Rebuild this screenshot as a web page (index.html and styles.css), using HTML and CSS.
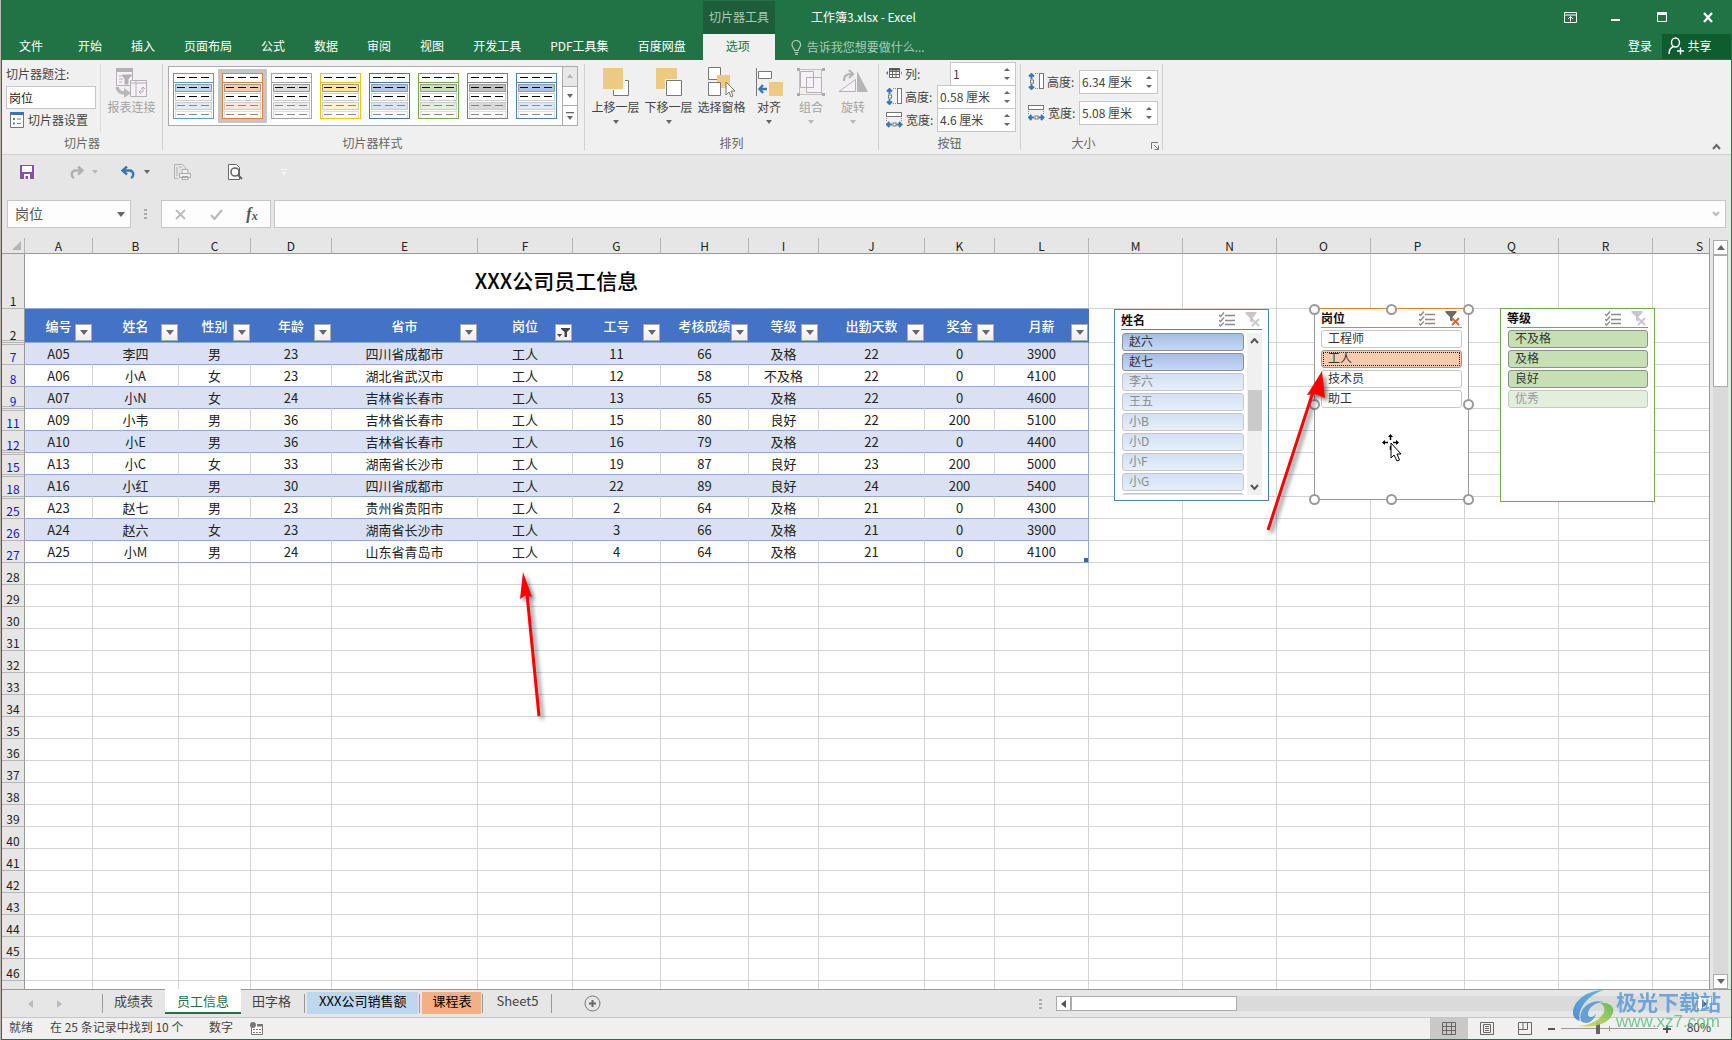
FILE: index.html
```html
<!DOCTYPE html>
<html lang="zh-CN">
<head>
<meta charset="utf-8">
<title>工作簿3.xlsx - Excel</title>
<link rel="stylesheet" href="styles.css">
</head>
<body>
<svg class="defs" aria-hidden="true">
  <symbol id="style-thumb" viewBox="0 0 41 46">
    <rect x="0" y="0" width="41" height="46" fill="#fff"/>
    <rect x="2.5" y="11.5" width="36" height="7" fill="var(--mid)" stroke="#999"/>
    <rect x="2.5" y="20.5" width="36" height="7" fill="#fff" stroke="#ccc"/>
    <rect x="2.5" y="29.5" width="36" height="7" fill="var(--light)" stroke="#ccc"/>
    <rect x="2.5" y="38.5" width="36" height="7" fill="#fff" stroke="#ddd"/>
    <rect x="0.5" y="0.5" width="40" height="45" fill="none" stroke="var(--line)"/>
    <path d="M0 9.5H41" stroke="var(--line)"/>
    <path d="M4 4.500h8m4 0h8m4 0h8M4 14.500h8m4 0h8m4 0h8M4 23.500h8m4 0h8m4 0h8" stroke="#000"/>
    <path d="M4 32.500h8m4 0h8m4 0h8M4 41.500h8m4 0h8m4 0h8" stroke="#888"/>
  </symbol>
  <symbol id="multi" viewBox="0 0 16 15">
    <path d="M6 3.500h10M6 8.500h10M6 12.500h10" stroke="#8a8a8a" stroke-width="1.500"/>
    <path d="M0 3l1.500 1.500L5 0.500M0 8l1.500 1.500L5 5.500M0 12.500L1.500 14L5 10.500" fill="none" stroke="#8a8a8a" stroke-width="1.300"/>
  </symbol>
  <symbol id="clear" viewBox="0 0 15 15">
    <path d="M0.500 0h11v1.500L7.500 6v5L5 9V6L0.500 1.500z" fill="var(--funnel)"/>
    <path d="M6 6h9v9H6z" fill="#fff"/>
    <path d="M5 5h2.500v6L5 9z" fill="var(--funnel)"/>
    <path d="M7 7l7 7M14 7l-7 7" stroke="var(--cross)" stroke-width="1.800"/>
  </symbol>
  <symbol id="hsize" viewBox="0 0 16 17">
    <path d="M3.500 1v5M1 3.500l2.500-2.500L6 3.500M3.500 16v-5M1 13.500L3.500 16 6 13.500" fill="none" stroke="#3a76b5" stroke-width="2"/>
    <rect x="2.500" y="7" width="3" height="3" fill="#fff" stroke="#777"/>
    <path d="M7 .5h4M7 15.500h4" stroke="#888" stroke-dasharray="1 1"/>
    <rect x="11.500" y=".5" width="4" height="15" fill="#fff" stroke="#777"/>
  </symbol>
  <symbol id="wsize" viewBox="0 0 17 16">
    <rect x=".5" y=".5" width="15" height="4" fill="#fff" stroke="#777"/>
    <path d="M.5 6v4M15.500 6v4" stroke="#888" stroke-dasharray="1 1"/>
    <path d="M1 12.500h5M3.500 10L1 12.500 3.500 15M15.500 12.500h-5M13 10L15.500 12.500 13 15" fill="none" stroke="#3a76b5" stroke-width="2"/>
    <rect x="7" y="11" width="3" height="3" fill="#fff" stroke="#777"/>
  </symbol>
  <symbol id="funnel-on" viewBox="0 0 15 15">
    <path d="M5 3h9v1L11 7v5H8.500V7L5 4z" fill="#444"/><path d="M1 9h5l-2.500 3z" fill="#444"/>
  </symbol>
</svg>

<div class="window">
  <header class="top">
    <div class="titlebar">
      <div class="context">切片器工具</div>
      <h1 class="doc">工作簿3.xlsx - Excel</h1>
      <div class="winbtns">
        <button aria-label="功能区显示选项"><svg width="13" height="11"><path d="M.5.500h12v10H.5zM.5 3h12M6.500 9.500v-5M4 7l2.500-2.500L9 7" fill="none" stroke="#fff"/></svg></button>
        <button aria-label="最小化"><svg width="10" height="11"><path d="M0 8h9" stroke="#fff" stroke-width="2"/></svg></button>
        <button aria-label="最大化"><svg width="11" height="11"><path d="M.5.500h9v9h-9z" fill="none" stroke="#fff"/><path d="M0 1.500h10" stroke="#fff" stroke-width="3"/></svg></button>
        <button aria-label="关闭"><svg width="11" height="11"><path d="M1 1l8 9M9 1L1 10" stroke="#fff" stroke-width="2.200"/></svg></button>
      </div>
    </div>
    <nav class="tabs">
      <button class="file">文件</button><button>开始</button><button>插入</button><button>页面布局</button><button>公式</button><button>数据</button><button>审阅</button><button>视图</button><button>开发工具</button><button>PDF工具集</button><button>百度网盘</button><button class="on">选项</button>
      <button class="tell"><svg width="11" height="15"><path d="M3.500 10.500C3.500 8 1 7.500 1 4.800a4.300 4.300 0 0 1 8.600 0c0 2.700-2.400 3.200-2.400 5.700zM3.500 12.500h4M4 14.300h3" fill="none" stroke="#a6cdb7" stroke-width="1.200"/></svg>告诉我您想要做什么...</button>
      <button class="login">登录</button>
      <button class="share"><svg width="16" height="18"><path d="M11.500 5.500a4 4.500 0 1 1-8 0a4 4.500 0 1 1 8 0M5.500 9.500C2 11 1 13 1 17M9 14h7M12.500 10.500v7" fill="none" stroke="#fff" stroke-width="1.400"/></svg>共享</button>
    </nav>
  </header>

  <section class="ribbon">
    <div class="group g-slicer">
      <div class="body">
        <div class="caption">
          <label for="cap">切片器题注:</label>
          <input id="cap" type="text" value="岗位">
          <button class="set"><svg width="14" height="16"><path d="M.5.500h13v15H.5z" fill="#fff" stroke="#777"/><path d="M0 1.500h14" stroke="#3a76b5" stroke-width="3"/><path d="M7 7h4M7 11.500h4" stroke="#777"/><path d="M3 6h2v2H3zM3 10.500h2v2H3z" fill="#777"/></svg>切片器设置</button>
        </div>
        <button class="big off report"><svg width="31" height="30"><path d="M.5.500h16v17H.500z" fill="#f6f1f6" stroke="#b3b0b3"/><path d="M0 2h17" stroke="#b3b0b3" stroke-width="4"/><path d="M6 7h10l-4 4v5h-3v-5zM3 8h3M3 11h4M3 14h3" fill="#b3b0b3" stroke="#b3b0b3"/><path d="M14.500 12.500h16v16h-16z" fill="#f6f1f6" stroke="#b3b0b3"/><path d="M15 15h15M20 13v15" stroke="#b3b0b3"/><path d="M27 19v5h-4m2-2l-2 2 2 2m0-5l2-2 2 2" fill="none" stroke="#b3b0b3"/><path d="M1 19c1 5 4 6 8 6" fill="none" stroke="#b8b8b8" stroke-width="3.500"/><path d="M8 20l7 5-7 5z" fill="#b8b8b8"/></svg>报表连接</button>
      </div>
      <div class="name">切片器</div>
    </div>
    <div class="group g-styles">
      <div class="gallery">
        <button class="s1" aria-label="样式1"><svg><use href="#style-thumb"/></svg></button>
        <button class="s2 sel" aria-label="样式2"><svg><use href="#style-thumb"/></svg></button>
        <button class="s3" aria-label="样式3"><svg><use href="#style-thumb"/></svg></button>
        <button class="s4" aria-label="样式4"><svg><use href="#style-thumb"/></svg></button>
        <button class="s5" aria-label="样式5"><svg><use href="#style-thumb"/></svg></button>
        <button class="s6" aria-label="样式6"><svg><use href="#style-thumb"/></svg></button>
        <button class="s7" aria-label="样式7"><svg><use href="#style-thumb"/></svg></button>
        <button class="s8" aria-label="样式8"><svg><use href="#style-thumb"/></svg></button>
        <div class="gscroll">
          <button class="dis" aria-label="上一行"><svg width="6" height="4"><path d="M0 4l3-4 3 4z" fill="#b5b5b5"/></svg></button>
          <button aria-label="下一行"><svg width="6" height="4"><path d="M0 0l3 4 3-4z" fill="#666"/></svg></button>
          <button aria-label="其他"><svg width="8" height="8"><path d="M0 0h8v1.200H0zM1 4l3 4 3-4z" fill="#666"/></svg></button>
        </div>
      </div>
      <div class="name">切片器样式</div>
    </div>
    <div class="group g-arrange">
      <div class="body">
        <button class="big"><svg width="26" height="30"><path d="M10.500 12.500h15v15h-15z" fill="#fff" stroke="#777"/><path d="M0 0h22v22H0z" fill="#f0f0f0"/><path d="M0 0h20v21H0z" fill="#eec980"/></svg>上移一层<i class="caret"></i></button>
        <button class="big"><svg width="26" height="30"><path d="M0 0h21v21H0z" fill="#eec980"/><path d="M9 11h17v17H9z" fill="#f0f0f0"/><path d="M10.500 12.500h15v15h-15z" fill="#fff" stroke="#777"/></svg>下移一层<i class="caret"></i></button>
        <button class="big"><svg width="27" height="30"><path d="M.5-.500h12v12H.500zM.5 14.500h12v13H.500z" fill="#fff" stroke="#777"/><path d="M9 7h13v13H13v-6H9z" fill="#eec980"/><path d="M18 14v13l3-3 2 5 2-1-2-5h4z" fill="#fff" stroke="#777"/></svg>选择窗格</button>
        <button class="big narrow"><svg width="27" height="30"><path d="M.500 0v28" stroke="#777"/><path d="M2.500 3.500h13v7h-13z" fill="#fff" stroke="#777"/><path d="M13 14h14v14H13z" fill="#eec980"/><path d="M11 21H4M7 17l-3.500 4L7 25" fill="none" stroke="#3a76b5" stroke-width="2.400"/></svg>对齐<i class="caret"></i></button>
        <button class="big narrow off"><svg width="28" height="30"><path d="M2.500 1.500h22v25h-22z" fill="none" stroke="#c5bfc5"/><path d="M3.500 3.500h13v16h-13zM9.500 9.500h15v15h-15z" fill="#f6f1f6" stroke="#b3b0b3"/><path d="M16.500 9v10.500H9" fill="none" stroke="#b3b0b3"/><path d="M0 0h3v3H0zM25 0h3v3h-3zM0 25h3v3H0zM25 25h3v3h-3z" fill="#aaa"/></svg>组合<i class="caret"></i></button>
        <button class="big narrow off"><svg width="30" height="30"><path d="M1 23.500h16.500v-12z" fill="#f6f1f6" stroke="#b3b0b3"/><path d="M19 3v21h11z" fill="#b5b5b5"/><path d="M6 13c0-6 3-7 8-7M11 2l4 4-4 4" fill="none" stroke="#b5b5b5" stroke-width="2.200"/></svg>旋转<i class="caret"></i></button>
      </div>
      <div class="name">排列</div>
    </div>
    <div class="group g-button">
      <div class="rows">
        <div class="row"><svg width="16" height="17"><path d="M3.500 3.500h10v9h-10zM3 6.500h10M6.500 4v8M10 4v8M3 9.500h10" fill="#fff" stroke="#666"/><path d="M3 4.500h11" stroke="#555" stroke-width="2"/><path d="M2 6v4L0 8zM15 6v4l1-2z" fill="#3a76b5"/></svg><label for="cols">列:</label><span class="spin cols"><input id="cols" value="1"><span><button aria-label="增加"></button><button aria-label="减少"></button></span></span></div>
        <div class="row"><svg width="16" height="17"><use href="#hsize"/></svg><label for="bh">高度:</label><span class="spin"><input id="bh" value="0.58 厘米"><span><button aria-label="增加"></button><button aria-label="减少"></button></span></span></div>
        <div class="row"><svg width="17" height="16"><use href="#wsize"/></svg><label for="bw">宽度:</label><span class="spin"><input id="bw" value="4.6 厘米"><span><button aria-label="增加"></button><button aria-label="减少"></button></span></span></div>
      </div>
      <div class="name">按钮</div>
    </div>
    <div class="group g-size">
      <div class="rows">
        <div class="row"><svg width="16" height="17"><use href="#hsize"/></svg><label for="sh">高度:</label><span class="spin"><input id="sh" value="6.34 厘米"><span><button aria-label="增加"></button><button aria-label="减少"></button></span></span></div>
        <div class="row"><svg width="17" height="16"><use href="#wsize"/></svg><label for="sw">宽度:</label><span class="spin"><input id="sw" value="5.08 厘米"><span><button aria-label="增加"></button><button aria-label="减少"></button></span></span></div>
      </div>
      <div class="name">大小</div>
      <button class="launch" aria-label="大小和属性"><svg width="8" height="8"><path d="M.5 7V.5H7M3 3l4 4M7.500 3.500v4h-4" fill="none" stroke="#777"/></svg></button>
    </div>
    <button class="collapse" aria-label="折叠功能区"><svg width="9" height="7"><path d="M1 6l3.500-4L8 6" fill="none" stroke="#666" stroke-width="2"/></svg></button>
  </section>

  <div class="qat">
    <button class="q-save" aria-label="保存"><svg width="14" height="14"><path d="M0 0h14v14H0z" fill="#8650a8"/><path d="M2 1h10v6H2zM4 9h6v5H4z" fill="#fff"/><path d="M5.500 11h2.500v3H5.500z" fill="#8650a8"/></svg></button>
    <button class="q-redo" aria-label="重做"><svg width="15" height="13"><path d="M13 4.500H6a4 4 0 0 0-1 7.500M9 .5l4.500 4L9 8.500" fill="none" stroke="#b0b0b0" stroke-width="2.400"/></svg><i class="caret pale"></i></button>
    <button class="q-undo" aria-label="撤消"><svg width="15" height="13"><path d="M2 4.500h7a4 4 0 0 1 1 7.500M6 .5l-4.500 4L6 8.500" fill="none" stroke="#3a76b5" stroke-width="2.400"/></svg><i class="caret"></i></button>
    <button class="q-print" aria-label="快速打印"><svg width="17" height="16"><path d="M4 14.500H.500V.500h8l3 3V6M3 3v9M5 3h3" fill="none" stroke="#b3b0b3"/><path d="M5.500 9.500h11v4h-11zM8 5.500h6v4H8zM8 12.500h6v3H8z" fill="#f3eff3" stroke="#aaa"/></svg></button>
    <button class="q-view" aria-label="打印预览"><svg width="15" height="16"><path d="M.5.500h8l3 3v12H.500z" fill="#fff" stroke="#666"/><circle cx="7" cy="8" r="4" fill="#fff" stroke="#666" stroke-width="1.600"/><path d="M10 11l4 4" stroke="#666" stroke-width="2"/></svg></button>
    <button class="q-more" aria-label="自定义"><svg width="6" height="7"><path d="M0 0h6v1H0zM0 3h6L3 6z" fill="#f8f8f8"/></svg></button>
  </div>

  <div class="formula">
    <div class="namebox"><input aria-label="名称框" value="岗位"><button aria-label="名称列表"><svg width="8" height="5"><path d="M0 0h8L4 5z" fill="#666"/></svg></button></div>
    <span class="dots"></span>
    <div class="fx">
      <button aria-label="取消"><svg width="11" height="11"><path d="M1 1l9 9M10 1l-9 9" stroke="#bbb" stroke-width="1.800"/></svg></button>
      <button aria-label="输入"><svg width="13" height="11"><path d="M1 6l3.500 4L12 1" fill="none" stroke="#bbb" stroke-width="2.200"/></svg></button>
      <button aria-label="插入函数" class="fn">f<small>x</small></button>
    </div>
    <div class="fbar"><input aria-label="编辑栏"><button aria-label="展开编辑栏"><svg width="8" height="6"><path d="M1 1l3 3 3-3" fill="none" stroke="#bbb" stroke-width="2"/></svg></button></div>
  </div>

  <main class="work">
    <div class="pane">
      <table class="sheet">
        <colgroup><col class="c0"><col class="cA"><col class="cB"><col class="cC"><col class="cD"><col class="cE"><col class="cF"><col class="cG"><col class="cG"><col class="cI"><col class="cJ"><col class="cI"><col class="cL"><col class="cL"><col class="cL"><col class="cL"><col class="cL"><col class="cL"><col class="cL"><col class="cL"></colgroup>
        <thead><tr><th class="corner"><svg width="9" height="9"><path d="M9 0v9H0z" fill="#b5b5b5"/></svg><th>A<th>B<th>C<th>D<th>E<th>F<th>G<th>H<th>I<th>J<th>K<th>L<th>M<th>N<th>O<th>P<th>Q<th>R<th>S</tr></thead>
        <tbody>
        <tr class="r1"><th>1<td colspan="12" class="title">XXX公司员工信息<td><td><td><td><td><td><td></tr>
        <tr class="r2"><th class="gap">2<td>编号<button aria-label="筛选"></button><td>姓名<button aria-label="筛选"></button><td>性别<button aria-label="筛选"></button><td>年龄<button aria-label="筛选"></button><td>省市<button aria-label="筛选"></button><td>岗位<button class="active" aria-label="已筛选"><svg width="15" height="15"><use href="#funnel-on"/></svg></button><td>工号<button aria-label="筛选"></button><td>考核成绩<button aria-label="筛选"></button><td>等级<button aria-label="筛选"></button><td>出勤天数<button aria-label="筛选"></button><td>奖金<button aria-label="筛选"></button><td>月薪<button aria-label="筛选"></button><td><td><td><td><td><td><td></tr>
        <tr class="d band"><th class="after">7<td>A05<td>李四<td>男<td>23<td>四川省成都市<td>工人<td>11<td>66<td>及格<td>22<td>0<td>3900<td><td><td><td><td><td><td></tr>
        <tr class="d"><th>8<td>A06<td>小A<td>女<td>23<td>湖北省武汉市<td>工人<td>12<td>58<td>不及格<td>22<td>0<td>4100<td><td><td><td><td><td><td></tr>
        <tr class="d band"><th class="gap">9<td>A07<td>小N<td>女<td>24<td>吉林省长春市<td>工人<td>13<td>65<td>及格<td>22<td>0<td>4600<td><td><td><td><td><td><td></tr>
        <tr class="d"><th class="after">11<td>A09<td>小韦<td>男<td>36<td>吉林省长春市<td>工人<td>15<td>80<td>良好<td>22<td>200<td>5100<td><td><td><td><td><td><td></tr>
        <tr class="d band"><th class="gap">12<td>A10<td>小E<td>男<td>36<td>吉林省长春市<td>工人<td>16<td>79<td>及格<td>22<td>0<td>4400<td><td><td><td><td><td><td></tr>
        <tr class="d"><th class="gap after">15<td>A13<td>小C<td>女<td>33<td>湖南省长沙市<td>工人<td>19<td>87<td>良好<td>23<td>200<td>5000<td><td><td><td><td><td><td></tr>
        <tr class="d band"><th class="gap after">18<td>A16<td>小红<td>男<td>30<td>四川省成都市<td>工人<td>22<td>89<td>良好<td>24<td>200<td>5400<td><td><td><td><td><td><td></tr>
        <tr class="d"><th class="after">25<td>A23<td>赵七<td>男<td>23<td>贵州省贵阳市<td>工人<td>2<td>64<td>及格<td>21<td>0<td>4300<td><td><td><td><td><td><td></tr>
        <tr class="d band"><th>26<td>A24<td>赵六<td>女<td>23<td>湖南省长沙市<td>工人<td>3<td>66<td>及格<td>21<td>0<td>3900<td><td><td><td><td><td><td></tr>
        <tr class="d last"><th>27<td>A25<td>小M<td>男<td>24<td>山东省青岛市<td>工人<td>4<td>64<td>及格<td>21<td>0<td>4100<td><td><td><td><td><td><td></tr>
        <tr><th>28<td><td><td><td><td><td><td><td><td><td><td><td><td><td><td><td><td><td><td></tr>
        <tr><th>29<td><td><td><td><td><td><td><td><td><td><td><td><td><td><td><td><td><td><td></tr>
        <tr><th>30<td><td><td><td><td><td><td><td><td><td><td><td><td><td><td><td><td><td><td></tr>
        <tr><th>31<td><td><td><td><td><td><td><td><td><td><td><td><td><td><td><td><td><td><td></tr>
        <tr><th>32<td><td><td><td><td><td><td><td><td><td><td><td><td><td><td><td><td><td><td></tr>
        <tr><th>33<td><td><td><td><td><td><td><td><td><td><td><td><td><td><td><td><td><td><td></tr>
        <tr><th>34<td><td><td><td><td><td><td><td><td><td><td><td><td><td><td><td><td><td><td></tr>
        <tr><th>35<td><td><td><td><td><td><td><td><td><td><td><td><td><td><td><td><td><td><td></tr>
        <tr><th>36<td><td><td><td><td><td><td><td><td><td><td><td><td><td><td><td><td><td><td></tr>
        <tr><th>37<td><td><td><td><td><td><td><td><td><td><td><td><td><td><td><td><td><td><td></tr>
        <tr><th>38<td><td><td><td><td><td><td><td><td><td><td><td><td><td><td><td><td><td><td></tr>
        <tr><th>39<td><td><td><td><td><td><td><td><td><td><td><td><td><td><td><td><td><td><td></tr>
        <tr><th>40<td><td><td><td><td><td><td><td><td><td><td><td><td><td><td><td><td><td><td></tr>
        <tr><th>41<td><td><td><td><td><td><td><td><td><td><td><td><td><td><td><td><td><td><td></tr>
        <tr><th>42<td><td><td><td><td><td><td><td><td><td><td><td><td><td><td><td><td><td><td></tr>
        <tr><th>43<td><td><td><td><td><td><td><td><td><td><td><td><td><td><td><td><td><td><td></tr>
        <tr><th>44<td><td><td><td><td><td><td><td><td><td><td><td><td><td><td><td><td><td><td></tr>
        <tr><th>45<td><td><td><td><td><td><td><td><td><td><td><td><td><td><td><td><td><td><td></tr>
        <tr><th>46<td><td><td><td><td><td><td><td><td><td><td><td><td><td><td><td><td><td><td></tr>
        <tr><th><td><td><td><td><td><td><td><td><td><td><td><td><td><td><td><td><td><td><td></tr>
        </tbody>
      </table>

      <section class="slicer blue" aria-label="姓名">
        <header><h2>姓名</h2><button aria-label="多选"><svg width="16" height="15"><use href="#multi"/></svg></button><button class="clr" aria-label="清除筛选器"><svg width="15" height="15"><use href="#clear"/></svg></button></header>
        <div class="list">
          <div class="items"><button class="on">赵六</button><button class="on">赵七</button><button>李六</button><button>王五</button><button>小B</button><button>小D</button><button>小F</button><button>小G</button><button aria-label="下一项"></button></div>
          <div class="sbar"><svg width="9" height="6"><path d="M1 5l3.500-4L8 5" fill="none" stroke="#555" stroke-width="2"/></svg><span></span><svg width="9" height="6"><path d="M1 1l3.500 4L8 1" fill="none" stroke="#555" stroke-width="2"/></svg></div>
        </div>
      </section>

      <section class="slicer orange" aria-label="岗位">
        <header><h2>岗位</h2><button aria-label="多选"><svg width="16" height="15"><use href="#multi"/></svg></button><button class="clr" aria-label="清除筛选器"><svg width="15" height="15"><use href="#clear"/></svg></button></header>
        <div class="items"><button>工程师</button><button class="on">工人</button><button>技术员</button><button>助工</button></div>
        <i class="h tl"></i><i class="h tc"></i><i class="h tr"></i><i class="h ml"></i><i class="h mr"></i><i class="h bl"></i><i class="h bc"></i><i class="h br"></i>
      </section>

      <section class="slicer green" aria-label="等级">
        <header><h2>等级</h2><button aria-label="多选"><svg width="16" height="15"><use href="#multi"/></svg></button><button class="clr" aria-label="清除筛选器"><svg width="15" height="15"><use href="#clear"/></svg></button></header>
        <div class="items"><button class="on">不及格</button><button class="on">及格</button><button class="on">良好</button><button class="none">优秀</button></div>
      </section>

      <svg class="arrow a1" width="80" height="180" viewBox="0 0 80 180"><path d="M9 168L54 30" stroke="#f00" stroke-width="3"/><path d="M63 9L66 36 56 32 48 33z" fill="#f00"/></svg>
      <svg class="arrow a2" width="40" height="160" viewBox="0 0 40 160"><path d="M25 150L13 28" stroke="#f00" stroke-width="3"/><path d="M9 6L18 31 12 29 6 33z" fill="#f00"/></svg>
      <svg class="cursor" width="20" height="28" viewBox="0 0 20 28"><path d="M8.500 1v5M8.500 12v4M1 8.500h5M11 8.500h5" stroke="#000" stroke-width="1.500"/><path d="M8.500 0L6 3h5zM0 8.500L3 6v5zM17 8.500L14 6v5z"/><path d="M9 9v15l3-3 3 6 2.500-1-2.500-6h4z" fill="#fff" stroke="#000"/></svg>
    </div>
    <div class="vscroll">
      <button aria-label="向上滚动"><svg width="8" height="5"><path d="M0 5l4-5 4 5z" fill="#666"/></svg></button>
      <span class="thumb"></span>
      <span class="track"></span>
      <button aria-label="向下滚动"><svg width="8" height="5"><path d="M0 0l4 5 4-5z" fill="#666"/></svg></button>
    </div>
  </main>

  <div class="sheets">
    <button class="nav" aria-label="上一个"><svg width="5" height="8"><path d="M5 0v8L0 4z" fill="#bbb"/></svg></button>
    <button class="nav" aria-label="下一个"><svg width="5" height="8"><path d="M0 0v8l5-4z" fill="#bbb"/></svg></button>
    <span class="sep lead"></span>
    <button class="tab">成绩表</button>
    <button class="tab cur">员工信息</button>
    <button class="tab">田字格</button>
    <span class="sep"></span>
    <button class="tab tblue">XXX公司销售额</button>
    <span class="sep"></span>
    <button class="tab torange">课程表</button>
    <span class="sep"></span>
    <button class="tab">Sheet5</button>
    <span class="sep"></span>
    <button class="add" aria-label="新工作表"><svg width="17" height="17"><circle cx="8.500" cy="8.500" r="7.500" fill="none" stroke="#777"/><path d="M8.500 5v7M5 8.500h7" stroke="#666" stroke-width="2"/></svg></button>
    <div class="hside">
      <span class="dots"></span>
      <div class="hscroll">
        <button aria-label="向左滚动"><svg width="5" height="8"><path d="M5 0v8L0 4z" fill="#555"/></svg></button>
        <span class="thumb"></span><span class="track"></span>
        <button aria-label="向右滚动"><svg width="5" height="8"><path d="M0 0v8l5-4z" fill="#555"/></svg></button>
      </div>
    </div>
  </div>

  <footer class="status">
    <span>就绪</span><span class="found">在 25 条记录中找到 10 个</span><span>数字</span>
    <svg width="14" height="13"><path d="M1.500 4v8.500h11V2.500H7" fill="#fff" stroke="#777"/><circle cx="3" cy="3" r="3" fill="#777"/><path d="M7 3.500h6" stroke="#777" stroke-width="2"/><path d="M3 7.500h9M3 10.500h9" stroke="#777" stroke-dasharray="2 1"/></svg>
    <div class="views">
      <button class="sel" aria-label="普通"><svg width="14" height="13"><path d="M.5.500h13v12H.500zM.5 4.500h13M.5 8.500h13M4.500 0v13M9.500 0v13" fill="none" stroke="#666"/></svg></button>
      <button aria-label="页面布局"><svg width="14" height="13"><path d="M.5.500h13v12H.500zM3.500 2.500h7v8h-7zM5 4.500h4M5 6.500h4M5 8.500h4" fill="none" stroke="#666"/></svg></button>
      <button aria-label="分页预览"><svg width="14" height="13"><path d="M.5.500h13v12H.500zM.5 7.500h9V0M5 0v7" fill="none" stroke="#666"/></svg></button>
      <button class="zb" aria-label="缩小"><svg width="8" height="8"><path d="M0 4h7" stroke="#555" stroke-width="2"/></svg></button>
      <input type="range" aria-label="缩放" min="0" max="100" value="38">
      <button class="zb" aria-label="放大"><svg width="8" height="8"><path d="M0 4h8M4 0v8" stroke="#555" stroke-width="2"/></svg></button>
      <button class="pct">80%</button>
    </div>
  </footer>

  <div class="mark" aria-hidden="true">
    <svg width="42" height="40" viewBox="0 0 42 40">
      <defs><linearGradient id="lg" x1="0" y1="1" x2="1" y2="0"><stop offset="0" stop-color="#3f7fc8"/><stop offset="1" stop-color="#4db4e6"/></linearGradient><linearGradient id="lg2" x1="0" y1="1" x2="1" y2="0"><stop offset="0" stop-color="#e6d94a"/><stop offset="1" stop-color="#4fb848"/></linearGradient></defs>
      <path d="M31 1C14 1 0 12 0 24c0 4 3 7 7 8C4 22 12 7 31 1z" fill="url(#lg)"/>
      <path d="M8 32C4 20 18 9 31 13c-8 0-16 5-16 12 0 4 6 4 8-1-1 6-5 9-9 10-3 0-5-1-6-2z" fill="#4f95d2"/>
      <path d="M4 37c10 0 22-5 26-12 3-5 1-9-3-11 8-1 15 3 13 10C37 34 22 40 4 37z" fill="url(#lg2)"/>
    </svg>
    <div><b>极光下载站</b><span>www.xz7.com</span></div>
  </div>
</div>
</body>
</html>
```
FILE: styles.css
```css
* { box-sizing: border-box; }
body {
  margin: 0;
  background: #b9b9b9;
  font: 12px/16px "Noto Sans CJK SC", sans-serif;
  color: #444;
}
button, input { font: inherit; color: inherit; padding: 0; margin: 0; border: 0; background: none; border-radius: 0; }
button { display: flex; align-items: center; justify-content: center; white-space: nowrap; }
input { min-width: 0; outline: 0; }
svg { display: block; flex: none; }
h1, h2 { margin: 0; font: inherit; }
.defs { position: absolute; width: 0; height: 0; }

.window {
  position: relative;
  display: flex;
  flex-direction: column;
  height: 100vh;
  margin-left: 1px;
  border: 1px solid #217346;
  border-top: 0;
  background: #e6e6e6;
  overflow: hidden;
}

/* title bar and tabs */
.top { background: #217346; color: #fff; flex: none; }
.titlebar { display: flex; height: 34px; padding-left: 701px; align-items: center; }
.context { width: 72px; height: 33px; margin-top: 1px; background: #1e5c3a; color: #a6cdb7; text-align: center; line-height: 32px; }
.doc { margin-left: 36px; flex: 1; white-space: nowrap; }
.winbtns { display: flex; }
.winbtns button { width: 46px; height: 32px; }
.tabs { display: flex; height: 26px; }
.tabs button { padding: 0 14px 2px 15px; }
.tabs .file { padding: 0 20px 2px 17px; }
.tabs .on { width: 72px; margin-left: 3px; padding: 0 2px 2px 0; background: #f0f0f0; color: #217346; }
.tabs .tell { gap: 5px; padding: 0 0 0 16px; color: #a6cdb7; margin-right: auto; }
.tabs .login { padding: 0 10px 2px; }
.tabs .share { width: 69px; height: 25px; padding: 0 19px 2px 6px; gap: 3px; background: #0f5c2f; }

/* ribbon */
.ribbon { display: flex; flex: none; height: 95px; background: #f0f0f0; border-bottom: 1px solid #d0d0d0; position: relative; }
.group { position: relative; display: flex; flex-direction: column; margin: 4px 0; height: 86px; border-right: 1px solid #d0d0d0; }
.name { margin-top: auto; text-align: center; color: #666; line-height: 14px; }
.body { display: flex; }
.g-slicer { width: 161px; }
.caption { width: 99px; height: 68px; padding: 0 4px; border-right: 1px solid #dcdcdc; display: flex; flex-direction: column; }
.caption label { height: 22px; line-height: 20px; flex: none; }
.caption input { height: 23px; width: 90px; flex: none; padding-left: 2px; background: #fff; border: 1px solid #c6c6c6; color: #222; }
.caption .set { height: 23px; flex: none; gap: 4px; padding: 0 0 1px 4px; justify-content: flex-start; }
.big { flex-direction: column; justify-content: flex-start; width: 53px; padding-top: 4px; height: 66px; }
.big svg { margin-bottom: 1px; overflow: visible; }
.big.narrow { width: 42px; }
.big.report { width: 61px; }
.off { color: #a3a3a3; }
.caret { border: 3px solid transparent; border-top: 4px solid #666; border-bottom: 0; margin-top: 5px; }
.off .caret, .caret.pale { border-top-color: #b8b8b8; }
.g-styles { width: 422px; }
.g-styles .name { padding-right: 2px; }
.gallery { display: flex; height: 60px; margin: 2px 6px 0 5px; background: #fff; border: 1px solid #ababab; }
.gallery > button { width: 49px; height: 54px; margin-top: 2px; }
.gallery svg { width: 41px; height: 46px; }
.gallery .sel { background: #c5c5c5; }
.gscroll { display: flex; flex-direction: column; width: 15px; margin-left: auto; border-left: 1px solid #ababab; }
.gscroll button { flex: 1; border-bottom: 1px solid #ababab; }
.gscroll button:last-child { border: 0; }
.gscroll .dis { background: #e8e8e8; }
.gscroll svg { width: 8px; height: 8px; }
.gscroll button:not(:last-child) svg { width: 6px; height: 4px; }
.s1 { --line: #5b9bd5; --mid: #bdd7ee; --light: #deebf7; }
.s2 { --line: #ed7d31; --mid: #f8cbad; --light: #fbe5d6; }
.s3 { --line: #a5a5a5; --mid: #dbdbdb; --light: #ededed; }
.s4 { --line: #ffc000; --mid: #ffe699; --light: #fff2cc; }
.s5 { --line: #4472c4; --mid: #b4c7e7; --light: #dae3f3; }
.s6 { --line: #70ad47; --mid: #c5e0b4; --light: #e2f0d9; }
.s7 { --line: #808080; --mid: #bfbfbf; --light: #d9d9d9; }
.s8 { --line: #4f81bd; --mid: #a9c4eb; --light: #dce8f7; }
.g-arrange { width: 294px; }
.g-arrange .body { padding-left: 4px; }
.rows { display: flex; flex-direction: column; }
.row { display: flex; align-items: center; height: 23px; }
.row label { padding-left: 3px; }
.spin { display: flex; width: 79px; height: 24px; margin-left: auto; background: #fff; border: 1px solid #c6c6c6; }
.spin input { flex: 1; padding-left: 2px; }
.spin.cols { width: 66px; }
.spin > span { display: flex; flex-direction: column; width: 16px; padding: 2px 0; }
.spin > span button { flex: 1; }
.spin > span button::after { content: ""; border: 3px solid transparent; border-top: 0; border-bottom: 3px solid #666; }
.spin > span button:last-child::after { border-top: 3px solid #666; border-bottom: 0; }
.g-button { width: 142px; }
.g-button .rows { margin: -2px 4px 0 7px; }
.g-size .name { padding-right: 16px; }
.g-size { width: 142px; }
.g-size .rows { gap: 8px; margin: 6px 4px 0 7px; }
.launch { position: absolute; right: 3px; bottom: 0; }
.collapse { position: absolute; right: 10px; bottom: 4px; }

/* quick access */
.qat { display: flex; align-items: center; flex: none; height: 45px; padding: 0 0 11px 18px; }
.qat button { gap: 8px; }
.qat .caret { margin: 0; }
.q-save { margin-right: 35px; }
.q-redo { margin-right: 23px; }
.q-undo { margin-right: 24px; }
.q-print { margin-right: 37px; }
.q-view { margin-right: 38px; }

/* formula bar */
.formula { display: flex; flex: none; height: 38px; padding: 0 5px 10px 5px; color: #555; }
.formula > div { display: flex; align-items: center; height: 28px; background: #fdfdfd; border: 1px solid #c6c6c6; }
.namebox { width: 124px; font-size: 14px; }
.namebox input { flex: 1; padding: 0 0 2px 7px; }
.namebox button { width: 18px; }
.dots { width: 3px; height: 11px; margin: 9px 14px 0 13px; background: repeating-linear-gradient(#aaa 0 2px, transparent 2px 4px); }
.fx { width: 110px; }
.fx button { flex: 1; }
.fn { font: italic bold 16px/20px "Liberation Serif", serif; }
.fn small { font-size: 12px; padding-top: 4px; }
.fbar { flex: 1; margin-left: 3px; }
.fbar input { flex: 1; }
.fbar button { width: 18px; }

/* worksheet */
.work { display: flex; flex: 1; min-height: 0; border-bottom: 1px solid #999; }
.pane { position: relative; flex: 1; min-width: 0; overflow: hidden; background: #fff; border-right: 1px solid #999; }
.sheet { table-layout: fixed; width: 1745px; border-collapse: separate; border-spacing: 0; font-size: 13px; line-height: 20px; color: #222; }
.c0 { width: 23px; } .cA { width: 68px; } .cB { width: 86px; } .cC { width: 72px; } .cD { width: 81px; }
.cE { width: 146px; } .cF { width: 95px; } .cG { width: 88px; } .cI { width: 70px; } .cJ { width: 106px; } .cL { width: 94px; }
.sheet tr { height: 22px; }
.sheet td { padding: 0; border: 0 solid #d4d4d4; border-width: 0 1px 1px 0; text-align: center; white-space: nowrap; }
.sheet th { padding: 0; background: #e6e6e6; font-weight: normal; font-size: 12px; }
.sheet thead tr { height: 16px; }
.sheet thead th { line-height: 15px; border-right: 1px solid #b5b5b5; border-bottom: 1px solid #999; }
.sheet .corner svg { margin-left: 10px; }
.sheet tbody th { vertical-align: bottom; line-height: 15px; border-right: 1px solid #999; border-bottom: 1px solid #b5b5b5; }
.sheet tbody .gap { background: linear-gradient(#b5b5b5, #b5b5b5) 0 calc(100% - 1px) / 100% 1px no-repeat #e6e6e6; }
.sheet tbody .after { background: linear-gradient(#b5b5b5, #b5b5b5) 0 1px / 100% 1px no-repeat #e6e6e6; }
.sheet .d th { color: #1010f0; }
.sheet .r1 { height: 55px; }
.sheet .title { padding-bottom: 2px; font-size: 21px; font-weight: 500; color: #000; border-bottom-color: #8ea9db; }
.sheet .r2 { height: 34px; }
.r2 td:nth-child(-n+13) { position: relative; background: #4472c4; color: #fff; font-weight: 500; border-color: #4472c4; border-bottom-color: #8ea9db; }
.r2 button { position: absolute; right: 0; bottom: 1px; width: 17px; height: 17px; background: linear-gradient(#fff, #ededf2); border: 1px solid #aaa; }
.r2 button:not(.active)::after { content: ""; border: 4px solid transparent; border-top: 5px solid #666; border-bottom: 0; }
.d td:nth-child(-n+13) { border-bottom-color: #8ea9db; }
.band td:nth-child(-n+13) { background: #d9e1f2; border-right-color: #d9e1f2; }
.d td:nth-child(13) { border-right-color: #8ea9db; }
.last td:nth-child(13) { background: linear-gradient(#3f5fb5, #3f5fb5) 100% 100% / 4px 4px no-repeat; }

/* slicers float over the grid */
.slicer { position: absolute; width: 155px; background: #fff; border: 1px solid; font-size: 12px; --funnel: #cbc5cb; --cross: #cbc5cb; }
.slicer header { display: flex; align-items: center; height: 20px; margin: 0 6px; padding-right: 2px; border-bottom: 1px solid; }
.slicer h2 { flex: 1; font-weight: 700; color: #111; }
.clr { margin-left: 10px; }
.items { display: flex; flex-direction: column; gap: 2px; margin: 2px 6px 0; }
.items button { height: 18px; padding: 0 0 2px 6px; justify-content: flex-start; border: 1px solid #c6c6c6; border-radius: 3px; color: #333; }
.blue { left: 1112px; top: 71px; height: 192px; border-color: #4f81bd; }
.blue header { border-color: #4f81bd; }
.blue .list { display: flex; height: 162px; margin: 3px 6px 0 7px; gap: 3px; overflow: hidden; }
.blue .items { flex: 1; margin: 0; overflow: hidden; }
.blue .items button { flex: none; background: linear-gradient(#d3e0f4, #e6effa); color: #8b8b8b; }
.blue .items .on { background: linear-gradient(#a3bde3, #c5d9f5); border-color: #8f8f8f; color: #333; }
.sbar { display: flex; flex-direction: column; justify-content: space-between; align-items: center; width: 15px; padding: 5px 0; background: #f0f0f0; }
.sbar span { width: 14px; height: 41px; background: #cacaca; margin-bottom: 8px; }
.orange { left: 1312px; top: 70px; height: 192px; border-color: #999; border-top-color: #ed7d31; --funnel: #6a6a6a; --cross: #e0623c; }
.orange header { border-color: #ed7d31; height: 19px; }
.orange .on { background: #f8cbad; border-color: #999; outline: 1px dotted #222; outline-offset: -3px; }
.green { left: 1498px; top: 70px; height: 194px; border-color: #70ad47; }
.green header { border-color: #70ad47; height: 19px; }
.green .items { margin-left: 7px; }
.green .on { background: #c6e0b4; border-color: #8f8f8f; }
.green .none { background: #e2efda; color: #999; }
.h { position: absolute; width: 11px; height: 11px; border: 2px solid #999; border-radius: 50%; background: #fff; }
.tl, .tc, .tr { top: -5px; } .ml, .mr { top: 90px; } .bl, .bc, .br { bottom: -6px; }
.tl, .ml, .bl { left: -6px; } .tc, .bc { left: 71px; } .tr, .mr, .br { right: -6px; }
.arrow { position: absolute; filter: drop-shadow(3px 3px 2px rgba(0, 0, 0, .5)); }
.a1 { left: 1257px; top: 124px; }
.a2 { left: 512px; top: 328px; }
.cursor { position: absolute; left: 1380px; top: 196px; }

/* scroll bars */
.vscroll { display: flex; flex-direction: column; width: 15px; margin: 2px 3px 0 3px; }
.vscroll button { height: 15px; background: #fff; border: 1px solid #ababab; }
.vscroll .thumb { height: 132px; background: #fff; border: 1px solid #ababab; }
.track { flex: 1; background: #dadada; }

/* sheet tabs */
.sheets { display: flex; flex: none; height: 28px; border-bottom: 1px solid #c6c6c6; font-size: 13px; }
.nav { width: 29px; margin-left: 0; }
.nav:first-child { margin-left: 14px; }
.sep { width: 1px; height: 19px; margin: 4px 2px 0 1px; background: #999; }
.lead { margin: 4px 0 0 28px; }
.tab { height: 24px; padding: 0 12px 2px 11px; }
.cur { margin-top: -1px; height: 25px; background: #fff; color: #217346; padding: 0 12px; border-bottom: 2px solid #217346; }
.tblue, .torange { height: 22px; margin-top: 2px; padding: 0 10px 4px; color: #000; }
.tblue { padding: 0 12px 4px; background: #bdd7ee; }
.torange { background: #f4b084; }
.add { width: 77px; padding-bottom: 1px; }
.hside { display: flex; width: 697px; margin-left: auto; }
.hscroll { display: flex; width: 656px; height: 15px; margin-top: 6px; }
.hscroll button { width: 15px; background: #fff; border: 1px solid #ababab; }
.hscroll .thumb { width: 166px; background: #fff; border: 1px solid #ababab; }
.hside .dots { margin: 9px 14px 0 5px; }

/* status bar */
.status { display: flex; align-items: center; flex: none; height: 21px; padding-left: 7px; gap: 17px; background: #f0f0f0; white-space: nowrap; }
.status > span { padding-bottom: 3px; }
.found { width: 142px; }
.views { display: flex; align-items: center; height: 21px; margin-left: auto; padding-right: 20px; }
.views button { width: 38px; height: 21px; }
.views .sel { background: #c8c8c8; }
.views .zb { width: 12px; }
.views .zb:nth-of-type(4) { margin-left: 2px; }
.views input { width: 97px; height: 16px; margin: 0 3px; appearance: none; background: linear-gradient(#999, #999) 0 50% / 100% 1px no-repeat, linear-gradient(#999, #999) 50% 50% / 1px 5px no-repeat; }
.views input::-webkit-slider-thumb { appearance: none; width: 4px; height: 11px; background: #666; }
.views .pct { width: 38px; padding-bottom: 3px; justify-content: flex-end; }

/* site mark laid over the corner */
.mark { position: absolute; right: 10px; bottom: 8px; display: flex; gap: 1px; opacity: .85; }
.mark b { display: block; font-size: 21px; line-height: 24px; color: #5a9bd8; }
.mark span { display: block; font: 17px/18px "Liberation Sans", sans-serif; color: #5cc27a; }
```
